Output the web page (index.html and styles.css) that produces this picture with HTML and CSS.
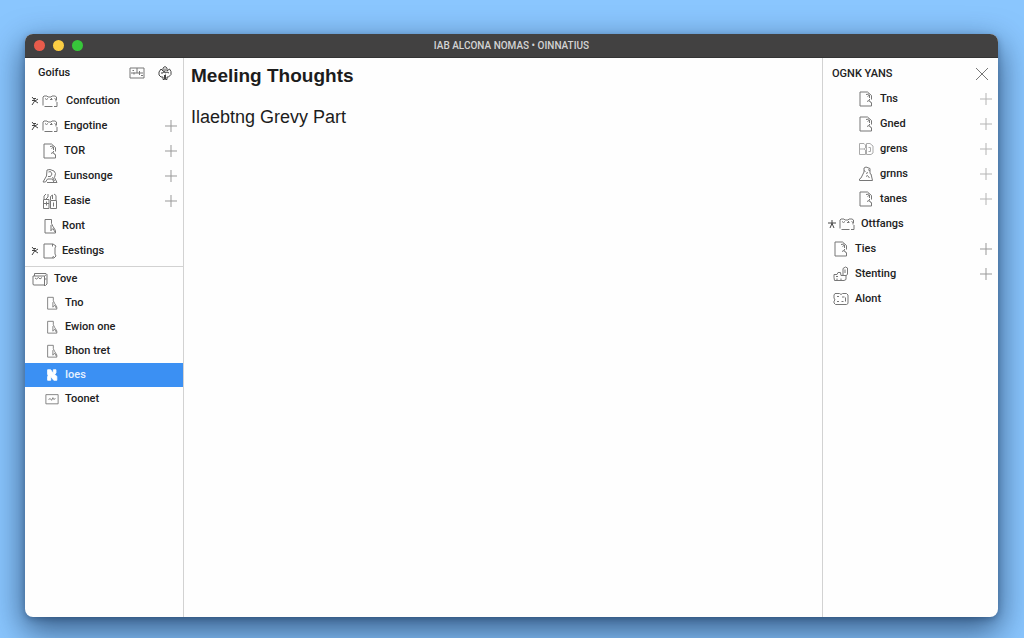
FILE: index.html
```html
<!DOCTYPE html>
<html lang="en">
<head>
<meta charset="utf-8">
<meta name="viewport" content="width=device-width, initial-scale=1">
<title>Meeling Thoughts</title>
<link rel="stylesheet" href="styles.css">
</head>
<body>
<svg class="sprite" aria-hidden="true">
  <symbol id="folder" viewBox="0 0 16 16"><path d="M1 12.500V4l1-1h3l1 1h3l1-1h3l1.500 1v3M15 9v4.500h-3M10.500 13.500H2.500M3 5.500l1.500 1 1.500-1M8 6.500h2.500M9.500 5v1.500M12.500 5.500l1.500 1v2"/></symbol>
  <symbol id="doc" viewBox="0 0 16 16"><path d="M9.500 1h-7.500v14h11.500v-3l-1-1.500M9.500 1l4 3.500v4M8 3.500l3-.5M9.500 5.500l2-1.500v3M11.500 8v1.500M9 10.500l2-1 1.500 2"/></symbol>
  <symbol id="lamp" viewBox="0 0 16 16"><path d="M5 2l3-.5 4 1.500 1.500 2.500-1 4 2.500 5h-3l-1.500-3.500H5.500l-2 3H1l3.500-6zM5 14.500h7M6.500 4l2-.5 1.500 2.500-1.500 2.500H6M10.500 9l2 4"/></symbol>
  <symbol id="bag" viewBox="0 0 16 16"><path d="M1.500 6.500h5.500v9h-5.500zM8.500 7.500h6v8h-6zM2 6V3l2-2M6 1v3l-2 2M8.500 7V3.500L10.500 2v4M12 1l2 1.500V7M4.500 8.500v4M11.500 9.500v4M2 10.500h5"/></symbol>
  <symbol id="page" viewBox="0 0 16 16"><path d="M9.500 1.500H3v13.500h10.500v-2.500L11 8.500M9.500 1.500v4L11 8.500M9 7v6M9 12.500l2-2 2 3.500"/></symbol>
  <symbol id="note" viewBox="0 0 16 16"><path d="M11 1H2v14h10l2-2-1-2V5l1-2zM10.500 1v2.500M10.500 15l1-2"/></symbol>
  <symbol id="drawer" viewBox="0 0 16 16"><path d="M1 5h11.500v9h-11L1 13zM2.500 5V2.500h11.500l1 1v9.500l-1.500 1.500H12M12.500 5l2-1.500M3 7l1.500 1L6.500 6.500 8 8l2-1.500M12.500 8h2"/></symbol>
  <symbol id="frame" viewBox="0 0 16 16"><path d="M1 3h14v10.500H1zM4 8.500l2-1 1.500 2 1.500-3 1 2 2-1"/></symbol>
  <symbol id="grid" viewBox="0 0 16 16"><path d="M1 3h14v10H1zM2 8h12M8 3v5M5 7.500V9.500M10.500 6v4M3.500 5.500h1.500M12 10.500h2"/></symbol>
  <symbol id="gear" viewBox="0 0 16 16"><path d="M6 3l2-1.500L10 3v3l2.500-2L14 6.500v3L11.500 12H10v2.500H8.500V9.500M6 3v3L4 4 2 7v3l2 2h2v2.500h1.500V10M4 8h2l1-2 1 2 2-1 2 1M8 3.500v3"/></symbol>
  <symbol id="cards" viewBox="0 0 16 16"><path d="M1.500 2.500h4.500l1.500 1.500v3L6 8l1.500 1v4.500h-6zM1.500 8H6M8.500 2.500h3.500L15 5v7l-2 1.500H8.500zM10.500 6.500h2v4h-2"/></symbol>
  <symbol id="cone" viewBox="0 0 16 16"><path d="M6 2l2-1 4 1.500v5l1 .5 1.500 6.500h-13V13L3 12 6 6zM6 4.500l1.500 1M8 7.500l2-1M10 3.500l2 1.500M8 10.500l1.500-1L11.500 12"/></symbol>
  <symbol id="machine" viewBox="0 0 16 16"><path d="M1 8.500h3l1-2h2.500l.5 3h5.500l1-1.500V2L12.500 1 10 2.500v6.500M1 8.500v3L1.500 14.500h9.500l2-1v-4M3 10.500h2M4 14v-1.500M8 14v-1.500M12 3.500v3.500"/></symbol>
  <symbol id="stack" viewBox="0 0 16 16"><path d="M2 2.500h4.500l1.500 1 1.500-1h4l1.500 1.500v8.500l-1.500 1h-11L1 12v-2l1-1-1-2V4zM4 5.500h2M9 6h2.500M4 10.500h2M8.500 10.500h2M12.500 6.500v4"/></symbol>
  <symbol id="badge" viewBox="0 0 16 16"><path fill="currentColor" d="M3 2h3.500l3 4.500V2h3v3.500L11 7.500l2.500 2V14H10L6.500 9.500V14H3v-4l.5-1.500L3 7z"/></symbol>
  <symbol id="twist" viewBox="0 0 10 10"><path d="M2 1l3 3.500-3 4.500M5 4.500H2M5 5l3-2M5 5l3 2M3 2.500h3"/></symbol>
  <symbol id="star" viewBox="0 0 10 10"><path d="M5 1v4M1 4h8M5 4.500L3 9M5 4.500L7 9"/></symbol>
  <symbol id="plus" viewBox="0 0 14 14"><path d="M7 1v12M1 7h12"/></symbol>
  <symbol id="close" viewBox="0 0 14 14"><path d="M1 1l12 12M13 1L1 13"/></symbol>
</svg>

<div class="window">
  <header class="titlebar">
    <div class="lights">
      <button class="light light-close" aria-label="Close window"></button>
      <button class="light light-min" aria-label="Minimize window"></button>
      <button class="light light-max" aria-label="Zoom window"></button>
    </div>
    <span class="window-title">IAB ALCONA NOMAS • OINNATIUS</span>
  </header>

  <div class="body">
    <aside class="sidebar">
      <div class="side-head">
        <h2 class="side-title">Goifus</h2>
        <button class="tool" aria-label="Layout"><svg class="icon"><use href="#grid"/></svg></button>
        <button class="tool" aria-label="Settings"><svg class="icon dark"><use href="#gear"/></svg></button>
      </div>
      <ul class="list">
        <li class="row"><svg class="twist"><use href="#twist"/></svg><a class="item roomy" href="#"><svg class="icon"><use href="#folder"/></svg>Confcution</a></li>
        <li class="row"><svg class="twist"><use href="#twist"/></svg><a class="item" href="#"><svg class="icon"><use href="#folder"/></svg>Engotine</a><button class="add" aria-label="Add Engotine"><svg class="mark"><use href="#plus"/></svg></button></li>
        <li class="row"><span class="twist"></span><a class="item" href="#"><svg class="icon"><use href="#doc"/></svg>TOR</a><button class="add" aria-label="Add TOR"><svg class="mark"><use href="#plus"/></svg></button></li>
        <li class="row"><span class="twist"></span><a class="item" href="#"><svg class="icon"><use href="#lamp"/></svg>Eunsonge</a><button class="add" aria-label="Add Eunsonge"><svg class="mark"><use href="#plus"/></svg></button></li>
        <li class="row"><span class="twist"></span><a class="item" href="#"><svg class="icon"><use href="#bag"/></svg>Easie</a><button class="add" aria-label="Add Easie"><svg class="mark"><use href="#plus"/></svg></button></li>
        <li class="row"><span class="twist"></span><a class="item tight" href="#"><svg class="icon"><use href="#page"/></svg>Ront</a></li>
        <li class="row"><svg class="twist"><use href="#twist"/></svg><a class="item tight" href="#"><svg class="icon"><use href="#note"/></svg>Eestings</a></li>
      </ul>
      <ul class="list second">
        <li class="row group"><a class="item" href="#"><svg class="icon"><use href="#drawer"/></svg>Tove</a></li>
        <li class="row"><a class="item" href="#"><svg class="icon small"><use href="#page"/></svg>Tno</a></li>
        <li class="row"><a class="item" href="#"><svg class="icon small"><use href="#page"/></svg>Ewion one</a></li>
        <li class="row"><a class="item" href="#"><svg class="icon small"><use href="#page"/></svg>Bhon tret</a></li>
        <li class="row selected"><a class="item" href="#" aria-current="page"><svg class="icon small"><use href="#badge"/></svg>Ioes</a></li>
        <li class="row"><a class="item" href="#"><svg class="icon small"><use href="#frame"/></svg>Toonet</a></li>
      </ul>
    </aside>

    <main class="editor">
      <h1 class="doc-title">Meeling Thoughts</h1>
      <p class="doc-sub">Ilaebtng Grevy Part</p>
    </main>

    <aside class="panel">
      <div class="panel-head">
        <h2 class="side-title">OGNK YANS</h2>
        <button class="tool" aria-label="Close panel"><svg class="mark close"><use href="#close"/></svg></button>
      </div>
      <ul class="list">
        <li class="row nested"><a class="item" href="#"><svg class="icon"><use href="#doc"/></svg>Tns</a><button class="add pale" aria-label="Add Tns"><svg class="mark"><use href="#plus"/></svg></button></li>
        <li class="row nested"><a class="item" href="#"><svg class="icon"><use href="#doc"/></svg>Gned</a><button class="add pale" aria-label="Add Gned"><svg class="mark"><use href="#plus"/></svg></button></li>
        <li class="row nested"><a class="item" href="#"><svg class="icon faint"><use href="#cards"/></svg>grens</a><button class="add pale" aria-label="Add grens"><svg class="mark"><use href="#plus"/></svg></button></li>
        <li class="row nested"><a class="item" href="#"><svg class="icon"><use href="#cone"/></svg>grnns</a><button class="add pale" aria-label="Add grnns"><svg class="mark"><use href="#plus"/></svg></button></li>
        <li class="row nested"><a class="item" href="#"><svg class="icon"><use href="#doc"/></svg>tanes</a><button class="add pale" aria-label="Add tanes"><svg class="mark"><use href="#plus"/></svg></button></li>
        <li class="row starred"><svg class="twist"><use href="#star"/></svg><a class="item" href="#"><svg class="icon"><use href="#folder"/></svg>Ottfangs</a></li>
        <li class="row"><a class="item" href="#"><svg class="icon"><use href="#doc"/></svg>Ties</a><button class="add" aria-label="Add Ties"><svg class="mark"><use href="#plus"/></svg></button></li>
        <li class="row"><a class="item" href="#"><svg class="icon"><use href="#machine"/></svg>Stenting</a><button class="add" aria-label="Add Stenting"><svg class="mark"><use href="#plus"/></svg></button></li>
        <li class="row"><a class="item" href="#"><svg class="icon"><use href="#stack"/></svg>Alont</a></li>
      </ul>
    </aside>
  </div>
</div>
</body>
</html>
```
FILE: styles.css
```css
* { box-sizing: border-box; }

body {
  margin: 0;
  min-height: 100vh;
  display: flex;
  padding: 34px 26px 21px 25px;
  background: #8ac6fe;
  color: #222;
  font: 500 11px/16px Roboto, "Liberation Sans", sans-serif;
}

h1, h2, p, ul { margin: 0; padding: 0; }
ul { list-style: none; }
a { color: inherit; text-decoration: none; }
button { padding: 0; border: 0; background: none; color: inherit; font: inherit; display: flex; }

.sprite { position: absolute; width: 0; height: 0; }

svg { fill: none; stroke: currentColor; flex: none; }

.window {
  flex: 1;
  display: flex;
  flex-direction: column;
  overflow: hidden;
  border-radius: 8px;
  background: #fefefe;
  box-shadow: 0 12px 32px 2px rgba(10, 35, 70, 0.65), 0 2px 6px rgba(10, 35, 70, 0.3);
}

.titlebar {
  display: grid;
  grid-template-columns: 1fr auto 1fr;
  align-items: center;
  height: 24px;
  padding: 0 9px;
  background: #424141;
  border-bottom: 1px solid #343434;
}
.lights { display: flex; gap: 8px; }
.light { width: 11px; height: 11px; border-radius: 50%; }
.light-close { background: #e85b4b; }
.light-min { background: #fbcd43; }
.light-max { background: #37c63a; }
.window-title { color: #d4d4d4; font-size: 10px; }

.body {
  flex: 1;
  display: grid;
  grid-template-columns: 159px 1fr 176px;
}

.sidebar { border-right: 1px solid #d2d2d2; }
.panel { border-left: 1px solid #d2d2d2; }

.side-head, .panel-head { display: flex; align-items: center; }
.side-head { height: 30px; gap: 12px; padding: 0 10px 0 13px; }
.panel-head { height: 28px; padding: 4px 9px 0; }
.side-title { flex: 1; font-size: 11px; font-weight: 500; }
.tool { color: #666; }

.icon { width: 16px; height: 16px; color: #777; }
.icon.dark { color: #444; }
.icon.faint { color: #aaa; }
.icon.small { width: 14px; height: 14px; }

.row { display: flex; align-items: center; height: 25px; padding: 0 5px; }
.twist { width: 10px; height: 10px; margin-right: 2px; color: #444; }
.item { flex: 1; display: flex; align-items: center; gap: 6px; }
.item.roomy { gap: 8px; }
.item.tight { gap: 4px; }
.add { color: #999; }
.add.pale { color: #b4b4b4; }
.mark { width: 14px; height: 14px; }
.close { color: #777; }

.second { margin-top: 3px; border-top: 1px solid #d2d2d2; }
.second .row { height: 24px; padding-left: 20px; }
.second .group { padding-left: 7px; }
.second .selected { background: #3b90f3; color: #e6f1ff; }
.selected .icon { color: #fff; }

.editor { padding: 6px 7px; color: #1c1c1c; font-family: "Liberation Sans", Arial, sans-serif; }
.doc-title { font-size: 19px; line-height: 24px; font-weight: 700; }
.doc-sub { margin-top: 17px; font-size: 18px; line-height: 24px; font-weight: 400; }

.panel .row { padding-left: 10px; }
.panel .nested { padding-left: 35px; }
.panel .starred { padding-left: 4px; }
```
